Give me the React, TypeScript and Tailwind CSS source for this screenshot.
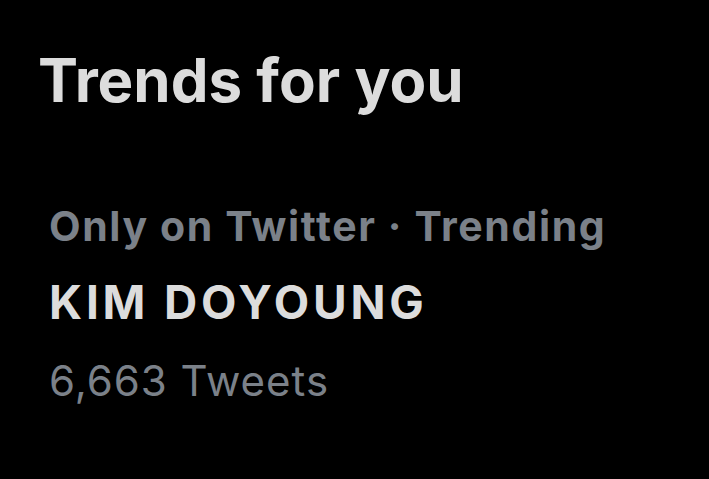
export default function App() {
  return (
    <div className="h-[479px] w-[709px] overflow-hidden bg-black font-['Inter',sans-serif]">
      <div className="pl-[38px] pt-[44px]">
        <h2 className="text-[60px] font-bold leading-[72px] text-[#dcdcdc]">
          Trends for you
        </h2>
      </div>
      <div className="flex flex-col pl-[49px] pt-[85px]">
        <div className="text-[41px] font-bold leading-[50px] tracking-[1.6px] text-[#7b8189]">
          Only on Twitter · Trending
        </div>
        <div className="mt-[24px] text-[46px] font-bold leading-[54px] tracking-[3.8px] text-[#dcdcdc]">
          KIM DOYOUNG
        </div>
        <div className="mt-[26px] text-[42px] leading-[52px] tracking-[1px] text-[#7b8189]">
          6,663 Tweets
        </div>
      </div>
    </div>
  );
}
